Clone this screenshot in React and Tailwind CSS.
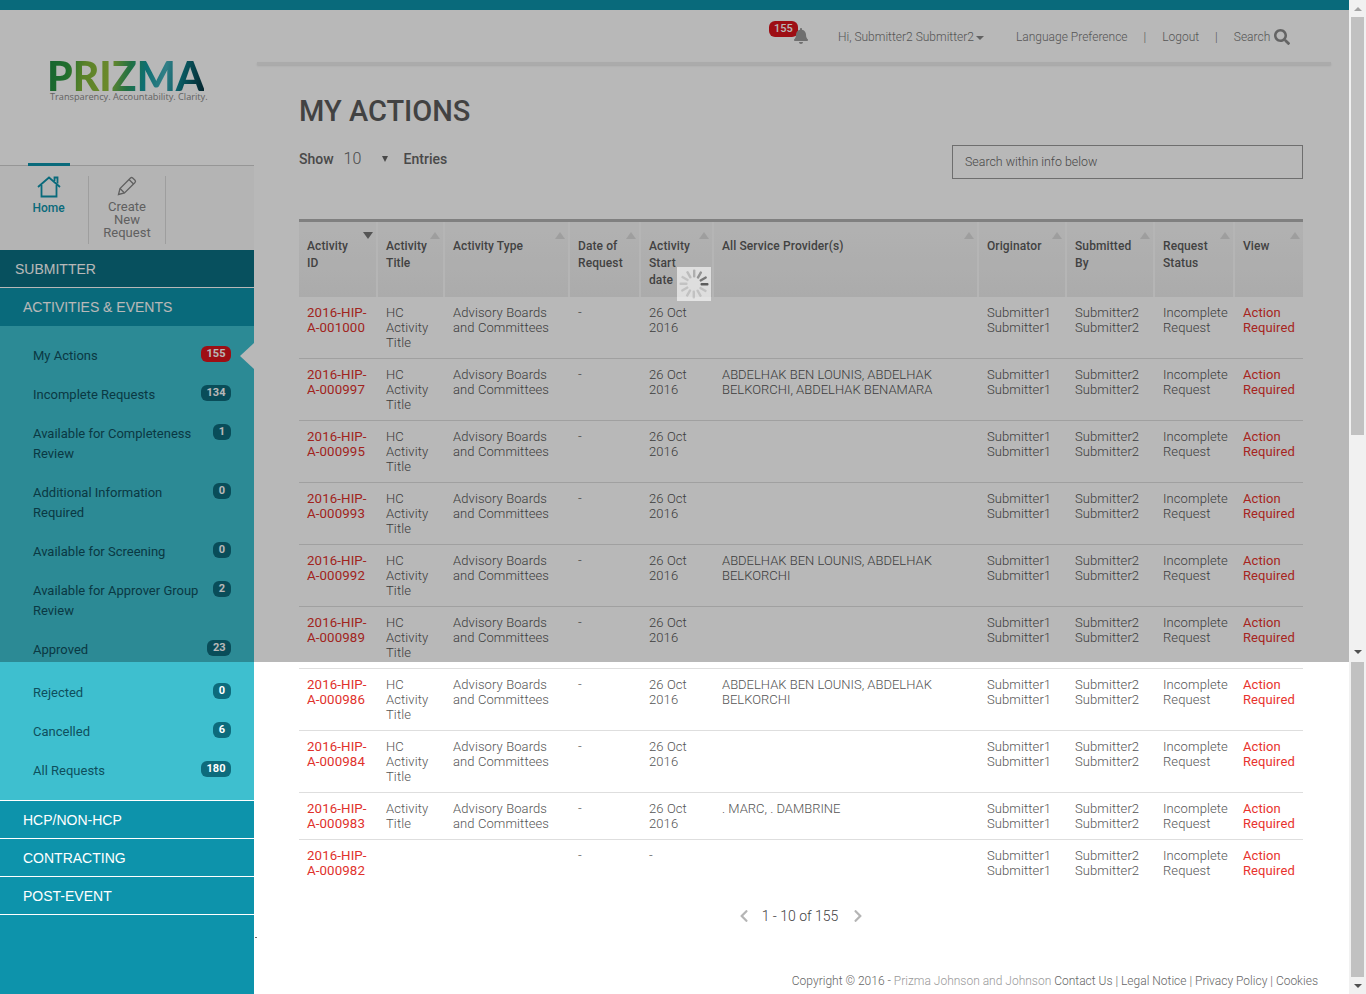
import { FaBell, FaSearch, FaChevronLeft, FaChevronRight } from "react-icons/fa";

const menuItems = [
  { label: "My Actions", count: 155, active: true },
  { label: "Incomplete Requests", count: 134 },
  { label: "Available for Completeness Review", count: 1 },
  { label: "Additional Information Required", count: 0 },
  { label: "Available for Screening", count: 0 },
  { label: "Available for Approver Group Review", count: 2 },
  { label: "Approved", count: 23 },
  { label: "Rejected", count: 0, gap: true },
  { label: "Cancelled", count: 6 },
  { label: "All Requests", count: 180 },
];

const columns = [
  { label: "Activity ID", width: "w-[79px]", sorted: true },
  { label: "Activity Title", width: "w-[67px]" },
  { label: "Activity Type", width: "w-[125px]" },
  { label: "Date of Request", width: "w-[71px]" },
  { label: "Activity Start date", width: "w-[73px]" },
  { label: "All Service Provider(s)", width: "w-[265px]" },
  { label: "Originator", width: "w-[88px]" },
  { label: "Submitted By", width: "w-[88px]" },
  { label: "Request Status", width: "w-[80px]" },
  { label: "View", width: "w-[68px]" },
];

const type = "Advisory Boards and Committees";
const rows = [
  { id: "2016-HIP-A-001000", title: "HC Activity Title", type, start: "26 Oct 2016", providers: "" },
  { id: "2016-HIP-A-000997", title: "HC Activity Title", type, start: "26 Oct 2016", providers: "ABDELHAK BEN LOUNIS, ABDELHAK BELKORCHI, ABDELHAK BENAMARA" },
  { id: "2016-HIP-A-000995", title: "HC Activity Title", type, start: "26 Oct 2016", providers: "" },
  { id: "2016-HIP-A-000993", title: "HC Activity Title", type, start: "26 Oct 2016", providers: "" },
  { id: "2016-HIP-A-000992", title: "HC Activity Title", type, start: "26 Oct 2016", providers: "ABDELHAK BEN LOUNIS, ABDELHAK BELKORCHI" },
  { id: "2016-HIP-A-000989", title: "HC Activity Title", type, start: "26 Oct 2016", providers: "" },
  { id: "2016-HIP-A-000986", title: "HC Activity Title", type, start: "26 Oct 2016", providers: "ABDELHAK BEN LOUNIS, ABDELHAK BELKORCHI" },
  { id: "2016-HIP-A-000984", title: "HC Activity Title", type, start: "26 Oct 2016", providers: "" },
  { id: "2016-HIP-A-000983", title: "Activity Title", type, start: "26 Oct 2016", providers: ". MARC, . DAMBRINE" },
  { id: "2016-HIP-A-000982", title: "", type: "", start: "-", providers: "" },
];

function Logo() {
  return (
    <div className="h-[155px] pt-[49px] pl-[47px]">
      <div className="w-fit font-['Lato',sans-serif] text-[41px] leading-[34px] font-black text-transparent bg-clip-text bg-[linear-gradient(100deg,#1f8a45_0%,#2f9a3f_14%,#7fb53a_24%,#95bf3c_40%,#2f9c5e_52%,#159a9e_62%,#45b0bb_74%,#0d7f8a_84%,#06333f_100%)]">
        PRIZMA
      </div>
      <div className="ml-[3px] whitespace-nowrap font-['Open_Sans',sans-serif] text-[9.2px] leading-[8px] text-[#8a8a8a]">
        Transparency. Accountability. Clarity.
      </div>
    </div>
  );
}

function HomeIcon() {
  return (
    <svg width="24" height="22" viewBox="0 0 24 22" fill="none" stroke="#0d93ab" strokeWidth="1.8">
      <path d="M1 11 12 1.5 23 11" />
      <path d="M4.5 9v11.5h15V9" />
      <path d="M17.5 5V1.5h3v6" />
    </svg>
  );
}

function PencilIcon() {
  return (
    <svg width="20" height="20" viewBox="0 0 20 20" fill="none" stroke="#858585" strokeWidth="1.3">
      <path d="M1.5 18.5 3 12.5 13.5 2a1.6 1.6 0 0 1 2.2 0l2.3 2.3a1.6 1.6 0 0 1 0 2.2L7.5 17z" />
      <path d="M3 12.5 7.5 17M12 3.5 16.5 8" />
    </svg>
  );
}

function Tabs() {
  return (
    <div className="relative h-[85px] bg-[#fafafa] border-t border-[#d0d0d0] font-['Roboto',sans-serif] text-[13px] leading-[13px]">
      <div className="absolute left-[28px] -top-[3px] h-[3px] w-[42px] bg-[#0d93ab]" />
      <div className="flex h-full pt-[10px] pb-[6px]">
        <div className="w-[89px] pl-[9px] flex flex-col items-center border-r border-[#dcdcdc] text-[#0d93ab]">
          <HomeIcon />
          <span className="mt-[4px] text-[12px] font-medium">Home</span>
        </div>
        <div className="w-[77px] px-[14px] flex flex-col items-center border-r border-[#dcdcdc] text-[#858585] text-center">
          <PencilIcon />
          <span className="mt-[4px]">Create New Request</span>
        </div>
      </div>
    </div>
  );
}

function Badge({ count, active }) {
  return (
    <span className={`h-[16px] min-w-[18px] shrink-0 rounded-[6px] px-[5.5px] text-center font-bold text-[11px] leading-[16px] text-white ${active ? "bg-[#dc141d]" : "bg-[#0d6b7c]"}`}>
      {count}
    </span>
  );
}

function Sidebar() {
  return (
    <aside className="w-[254px] shrink-0 flex flex-col bg-[#0d93ab]">
      <div className="bg-white">
        <Logo />
        <Tabs />
      </div>
      <div className="h-[38px] pl-[15px] bg-[#0b7083] border-b border-white text-[14px] leading-[38px] text-white font-['Liberation_Sans',sans-serif]">
        SUBMITTER
      </div>
      <div className="h-[38px] pl-[23px] bg-[#0d93ab] text-[14px] leading-[38px] text-white font-['Liberation_Sans',sans-serif]">
        ACTIVITIES &amp; EVENTS
      </div>
      <ul className="bg-[#3ebfcf] border-b border-white pt-[11px] pb-[9px] font-['Roboto',sans-serif] text-[13px] leading-[20px] text-[#0e4f5d]">
        {menuItems.map((item) => (
          <li key={item.label} className={`relative flex items-start justify-between pl-[33px] pr-[23px] pt-[9px] pb-[10px] ${item.gap ? "mt-[4px]" : ""}`}>
            <span className="w-[170px]">{item.label}</span>
            <Badge count={item.count} active={item.active} />
            {item.active && (
              <span className="absolute right-0 top-[6px] border-y-[13px] border-r-[14px] border-y-transparent border-r-white" />
            )}
          </li>
        ))}
      </ul>
      {["HCP/NON-HCP", "CONTRACTING", "POST-EVENT"].map((name) => (
        <div key={name} className="h-[38px] pl-[23px] border-b border-white text-[14px] leading-[39px] text-white font-['Liberation_Sans',sans-serif]">
          {name}
        </div>
      ))}
    </aside>
  );
}

function TopBar() {
  return (
    <header className="ml-[3px] mr-[18px] shrink-0 font-['Roboto',sans-serif] font-light text-[12px] text-[#777]">
      <div className="h-[52px] flex items-center pt-[1px]">
        <div className="relative ml-[512px] w-[32px] h-full">
          <span className="absolute left-0 top-[10px] h-[16px] rounded-[6px] bg-[#dc141d] px-[5px] text-[11px] leading-[16px] font-medium text-white">155</span>
          <FaBell className="absolute left-[24px] top-[17px] text-[#9a9a9a]" size={16} />
        </div>
        <span className="ml-[37px] flex items-center w-[178px]">
          Hi, Submitter2 Submitter2
          <span className="ml-[2px] mt-[2px] border-x-[4px] border-t-[4px] border-x-transparent border-t-[#888]" />
        </span>
        <span>Language Preference</span>
        <span className="mx-[16px]">|</span>
        <span>Logout</span>
        <span className="mx-[16px]">|</span>
        <span>Search</span>
        <FaSearch className="ml-[4px] text-[#8b8b8b]" size={16} />
      </div>
      <div className="h-[3px] bg-[#ededed] shadow-[0_1px_2px_rgba(0,0,0,0.1)]" />
    </header>
  );
}

function SortArrow({ sorted }) {
  return (
    <span className={`absolute top-[10px] right-[3px] border-x-[5px] border-x-transparent ${sorted ? "border-t-[7px] border-t-[#777]" : "border-b-[7px] border-b-[#dcdcdc]"}`} />
  );
}

function ActionsTable() {
  return (
    <table className="w-[1004px] table-fixed border-separate border-spacing-0 border-t-[3px] border-[#b2b2b2] font-['Roboto',sans-serif] text-[13px] leading-[15px] tracking-[0.1px]">
      <colgroup>
        {columns.map((col) => (
          <col key={col.label} className={col.width} />
        ))}
      </colgroup>
      <thead>
        <tr>
          {columns.map((col) => (
            <th key={col.label} className="relative h-[75px] align-top pt-[16px] pl-[8px] pr-[18px] text-left font-medium text-[12px] leading-[17px] text-[#5c5c5c] border-r-2 border-[#fbfbfb] last:border-r-0 bg-[linear-gradient(#f6f6f6,#eeeeee)]">
              {col.label}
              <SortArrow sorted={col.sorted} />
            </th>
          ))}
        </tr>
      </thead>
      <tbody className="align-top font-light text-[#555]">
        {rows.map((row, i) => {
          const cell = `px-[8px] pt-[8px] pb-[8px] ${i < rows.length - 1 ? "border-b border-[#dedede]" : ""}`;
          return (
            <tr key={row.id}>
              <td className={`${cell} font-normal text-[13.3px] text-[#e0312c]`}>{row.id}</td>
              <td className={cell}>{row.title}</td>
              <td className={cell}>{row.type}</td>
              <td className={cell}>-</td>
              <td className={cell}>{row.start}</td>
              <td className={`${cell} tracking-normal`}>{row.providers}</td>
              <td className={cell}>Submitter1 Submitter1</td>
              <td className={cell}>Submitter2 Submitter2</td>
              <td className={cell}>Incomplete Request</td>
              <td className={`${cell} font-normal text-[#e8332d]`}>Action Required</td>
            </tr>
          );
        })}
      </tbody>
    </table>
  );
}

function Content() {
  return (
    <main className="flex-1 flex flex-col min-w-0">
      <TopBar />
      <div className="pl-[45px] pr-[46px]">
        <h1 className="mt-[28px] font-['Roboto',sans-serif] font-medium text-[29px] leading-[36px] text-[#5c5c5c]">MY ACTIONS</h1>
        <div className="mt-[16px] h-[34px] flex items-start justify-between font-['Roboto',sans-serif] font-medium text-[14px] text-[#666]">
          <div className="flex items-center h-[28px]">
            <span>Show</span>
            <span className="ml-[10px] w-[38px] font-light text-[16px]">10</span>
            <span className="border-x-[3.5px] border-t-[6px] border-x-transparent border-t-[#666]" />
            <span className="ml-[16px]">Entries</span>
          </div>
          <div className="w-[351px] h-[34px] border border-[#999] pl-[12px] text-[12.4px] leading-[32px] font-light text-[#666]">
            Search within info below
          </div>
        </div>
        <div className="mt-[40px]">
          <ActionsTable />
        </div>
        <div className="mt-[21px] flex items-center justify-center gap-[13px] font-['Roboto',sans-serif] text-[14px] leading-[18px] font-light text-[#444]">
          <FaChevronLeft className="mr-[-2px] text-[#b5b5b5]" size={14} />
          <span>1 - 10 of 155</span>
          <FaChevronRight className="text-[#b5b5b5]" size={14} />
        </div>
      </div>
      <footer className="mt-[48px] pr-[31px] text-right font-['Roboto',sans-serif] text-[12px] leading-[16px] font-light text-[#666]">
        Copyright © 2016 - <span className="text-[#999]">Prizma Johnson and Johnson</span> Contact Us | Legal Notice | Privacy Policy | Cookies
      </footer>
    </main>
  );
}

function ScrollArrow({ down }) {
  return (
    <div className="h-[17px] flex items-center justify-center bg-[#f1f1f1]">
      <span className={`border-x-[4px] border-x-transparent ${down ? "border-t-[4px] border-t-[#505050]" : "border-b-[4px] border-b-[#a3a3a3]"}`} />
    </div>
  );
}

function Scrollbars() {
  return (
    <div className="w-[17px] shrink-0 flex flex-col bg-[#f1f1f1]">
      <div className="h-[662px] flex flex-col">
        <ScrollArrow />
        <div className="h-[418px] mx-[2px] bg-[#c1c1c1]" />
        <div className="flex-1" />
        <ScrollArrow down />
        <div className="h-[2px]" />
      </div>
      <div className="flex-1 flex flex-col">
        <div className="flex-1 mx-[2px] bg-[#c1c1c1]" />
        <ScrollArrow down />
      </div>
    </div>
  );
}

function Spinner() {
  const spokes = Array.from({ length: 12 }, (_, i) => i);
  return (
    <div className="absolute left-[677px] top-[267px] w-[34px] h-[34px] bg-white/60 flex items-center justify-center">
      <svg width="32" height="32" viewBox="0 0 32 32">
        {spokes.map((i) => (
          <rect
            key={i}
            x="15"
            y="1.5"
            width="2.4"
            height="8"
            rx="1"
            fill="#555"
            opacity={[0.35, 0.55, 0.75, 0.95, 0.2, 0.2, 0.2, 0.2, 0.2, 0.2, 0.2, 0.25][i]}
            transform={`rotate(${i * 30} 16 16)`}
          />
        ))}
      </svg>
    </div>
  );
}

export default function App() {
  return (
    <div className="relative w-[1366px] h-[994px] overflow-hidden flex bg-white">
      <div className="w-[1349px] shrink-0 flex flex-col">
        <div className="h-[10px] shrink-0 bg-[#0d93ab]" />
        <div className="flex-1 flex min-h-0">
          <Sidebar />
          <Content />
        </div>
      </div>
      <Scrollbars />
      {/* loading mask only covers the first viewport of the page */}
      <div className="absolute left-0 top-0 w-[1349px] h-[662px] bg-black/[0.28]" />
      <Spinner />
      <div className="absolute left-[255px] top-[937px] w-[2px] h-[1px] bg-[#666]" />
    </div>
  );
}
